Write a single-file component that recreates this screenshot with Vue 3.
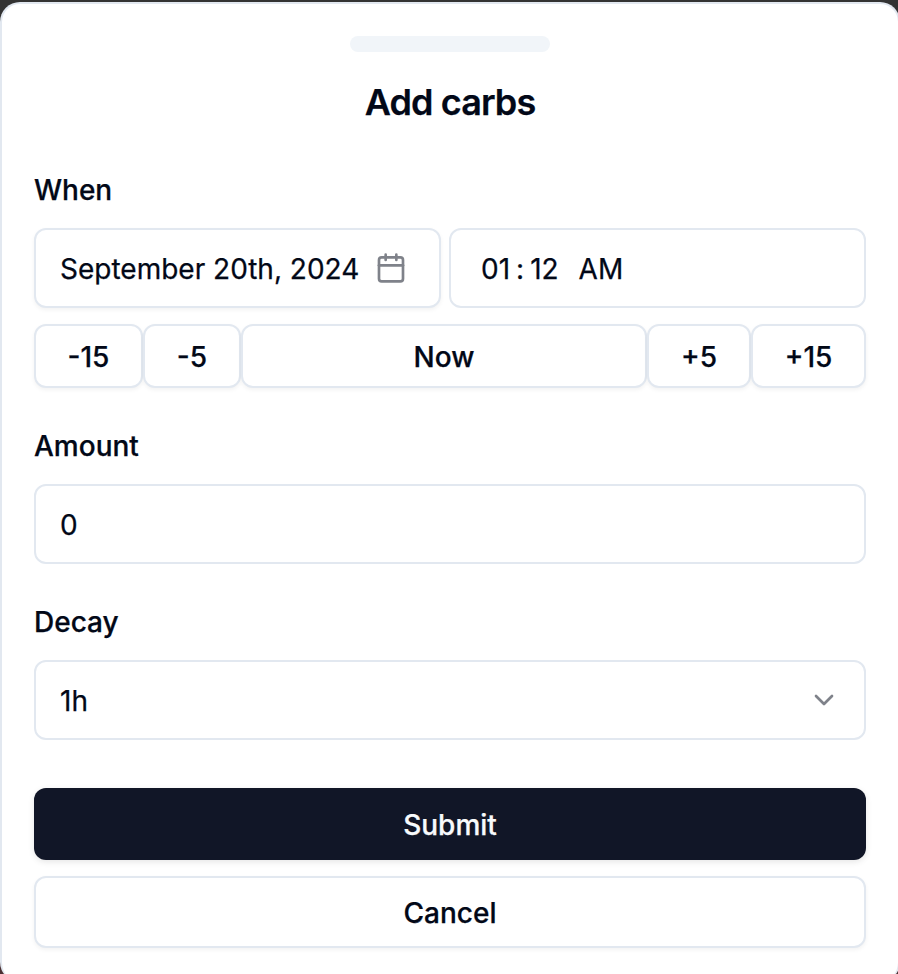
<script setup>
import { ref } from 'vue'

const date = ref('September 20th, 2024')
const time = ref({ hour: '01', minute: '12', period: 'AM' })
const amount = ref(0)
const decay = ref('1h')
const steps = [
  { label: '-15', size: 'w109' },
  { label: '-5', size: 'w98' },
  { label: 'Now', size: 'grow' },
  { label: '+5', size: 'w104' },
  { label: '+15', size: 'w115' },
]
</script>

<template>
  <div class="backdrop">
    <form class="sheet" @submit.prevent>
      <div class="handle"></div>
      <h2 class="title">Add carbs</h2>

      <div class="label">When</div>
      <div class="when">
        <button type="button" class="field date">
          <span class="value">{{ date }}</span>
          <svg class="icon" viewBox="0 0 24 24">
            <path d="M8 2v4M16 2v4" />
            <rect x="3" y="4" width="18" height="18" rx="2" />
            <path d="M3 10h18" />
          </svg>
        </button>
        <div class="field time">
          <span class="value hour">{{ time.hour }}</span>
          <span class="value colon">:</span>
          <span class="value minute">{{ time.minute }}</span>
          <span class="value">{{ time.period }}</span>
        </div>
      </div>
      <div class="steps">
        <button v-for="s in steps" :key="s.label" type="button" class="btn outline" :class="s.size">{{ s.label }}</button>
      </div>

      <div class="label">Amount</div>
      <div class="field"><span class="value">{{ amount }}</span></div>

      <div class="label">Decay</div>
      <div class="field select">
        <span class="value">{{ decay }}</span>
        <svg class="icon" viewBox="0 0 24 24"><path d="m6 9 6 6 6-6" /></svg>
      </div>

      <div class="actions">
        <button type="submit" class="btn primary">Submit</button>
        <button type="button" class="btn outline">Cancel</button>
      </div>
    </form>
  </div>
</template>

<style>
body {
  overflow: hidden;
}
</style>

<style scoped>
.backdrop {
  width: 898px;
  height: 974px;
  overflow: hidden;
  padding-top: 2px;
  box-sizing: border-box;
  background: linear-gradient(#333 0 50%, #4a3033 50%);
  font-family: Inter, sans-serif;
  font-size: 28px;
  line-height: 40px;
  color: #020817;
  -webkit-text-stroke: 0.25px currentColor;
}
.sheet {
  box-sizing: border-box;
  width: 900px;
  height: 980px;
  border: 2px solid #e2e8f0;
  border-bottom: 0;
  border-radius: 20px;
  padding: 32px;
  background: #fff;
  display: flex;
  flex-direction: column;
}
.handle {
  width: 200px;
  height: 16px;
  flex: none;
  align-self: center;
  border-radius: 8px;
  background: #f1f5f9;
}
.title {
  margin: 32px 0 0;
  text-align: center;
  font-size: 36px;
  line-height: 36px;
  font-weight: 600;
  letter-spacing: -0.9px;
}
.label {
  font-weight: 500;
  line-height: 28px;
  margin: 44px 0 24px;
}
.title + .label {
  margin-top: 56px;
}
.when {
  display: flex;
  gap: 8px;
}
.field {
  box-sizing: border-box;
  height: 80px;
  border: 2px solid #e2e8f0;
  border-radius: 12px;
  padding: 0 24px;
  background: #fff;
  color: inherit;
  font: inherit;
  display: flex;
  align-items: center;
}
.value {
  padding-top: 2px;
}
.date {
  width: 407px;
  justify-content: space-between;
  padding-right: 32px;
  box-shadow: 0 2px 4px rgba(0, 0, 0, 0.05);
}
.time {
  flex: 1;
  padding-left: 30px;
}
.hour {
  margin-right: 6px;
}
.colon {
  margin-right: 6px;
}
.minute {
  margin-right: 20px;
}
.icon {
  width: 32px;
  height: 32px;
  flex: none;
  fill: none;
  stroke: currentColor;
  stroke-width: 2;
  stroke-linecap: round;
  stroke-linejoin: round;
  opacity: 0.5;
}
.select {
  justify-content: space-between;
}
.steps {
  display: flex;
  margin-top: 16px;
}
.btn {
  box-sizing: border-box;
  height: 72px;
  padding: 2px 0 0;
  border: 2px solid #e2e8f0;
  border-radius: 12px;
  background: #fff;
  color: inherit;
  font: inherit;
  font-weight: 500;
  box-shadow: 0 2px 4px rgba(0, 0, 0, 0.05);
}
.steps .btn {
  height: 64px;
}
.w109 {
  width: 109px;
}
.w98 {
  width: 98px;
}
.w104 {
  width: 104px;
}
.w115 {
  width: 115px;
}
.grow {
  flex: 1;
}
.actions {
  display: flex;
  flex-direction: column;
  gap: 16px;
  margin-top: 48px;
}
.actions .primary {
  border: 0;
  background: #111627;
  color: #f8fafc;
  box-shadow: 0 2px 6px rgba(0, 0, 0, 0.1);
}
</style>
